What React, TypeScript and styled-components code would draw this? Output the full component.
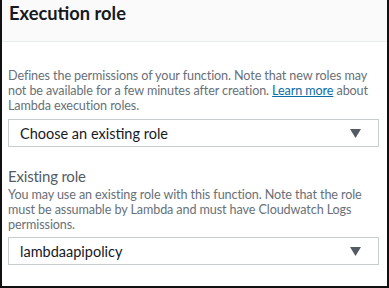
import styled, { createGlobalStyle } from 'styled-components';

const GlobalStyle = createGlobalStyle`
  html, body {
    margin: 0;
    padding: 0;
    background: #fff;
  }
  body {
    font-family: Lato, "Open Sans", sans-serif;
  }
`;

const Panel = styled.section`
  width: 389px;
  height: 288px;
  box-sizing: border-box;
  border: 2px solid #111;
  border-top: none;
  background: #fff;
  overflow: hidden;
`;

const Header = styled.header`
  height: 42px;
  box-sizing: border-box;
  padding: 0 8px 0 7px;
  background: #fafafa;
  border-bottom: 1px solid #eaeded;

  h2 {
    margin: 0;
    font-size: 18.3px;
    font-weight: 700;
    color: #16191f;
    line-height: 26px;
  }
`;

const Body = styled.div`
  padding: 26px 8px 0 6px;
`;

// lines are broken where the reference breaks them
const Hint = styled.p<{ top?: number }>`
  margin: ${({ top }) => top ?? 0}px 0 0;
  font-size: 12.6px;
  letter-spacing: -0.1px;
  line-height: 15px;
  color: #687078;
  white-space: nowrap;

  a {
    color: #0b6ea8;
    text-decoration: underline;
  }
`;

const Label = styled.div`
  margin-top: 19px;
  font-size: 15px;
  letter-spacing: -0.2px;
  line-height: 20px;
  color: #545b64;
`;

const Select = styled.div<{ gap?: number }>`
  margin-top: ${({ gap }) => gap ?? 5}px;
  height: 28px;
  box-sizing: border-box;
  border: 1px solid #c6cccf;
  display: flex;
  align-items: center;
  justify-content: space-between;
  padding: 0 17px 0 11px;
  font-size: 14.5px;
  color: #16191f;
`;

const Caret = () => (
  <svg width="11" height="9" viewBox="0 0 11 9">
    <polygon points="0,0 11,0 5.5,9" fill="#545b64" />
  </svg>
);

export default function App() {
  return (
    <>
      <GlobalStyle />
      <Panel>
        <Header>
          <h2>Execution role</h2>
        </Header>
        <Body>
          <Hint>
            Defines the permissions of your function. Note that new roles may
            <br />
            not be available for a few minutes after creation. <a href="#">Learn more</a> about
            <br />
            Lambda execution roles.
          </Hint>
          <Select gap={6}>
            <span>Choose an existing role</span>
            <Caret />
          </Select>
          <Label>Existing role</Label>
          <Hint top={1}>
            You may use an existing role with this function. Note that the role
            <br />
            must be assumable by Lambda and must have Cloudwatch Logs
            <br />
            permissions.
          </Hint>
          <Select gap={5}>
            <span>lambdaapipolicy</span>
            <Caret />
          </Select>
        </Body>
      </Panel>
    </>
  );
}
